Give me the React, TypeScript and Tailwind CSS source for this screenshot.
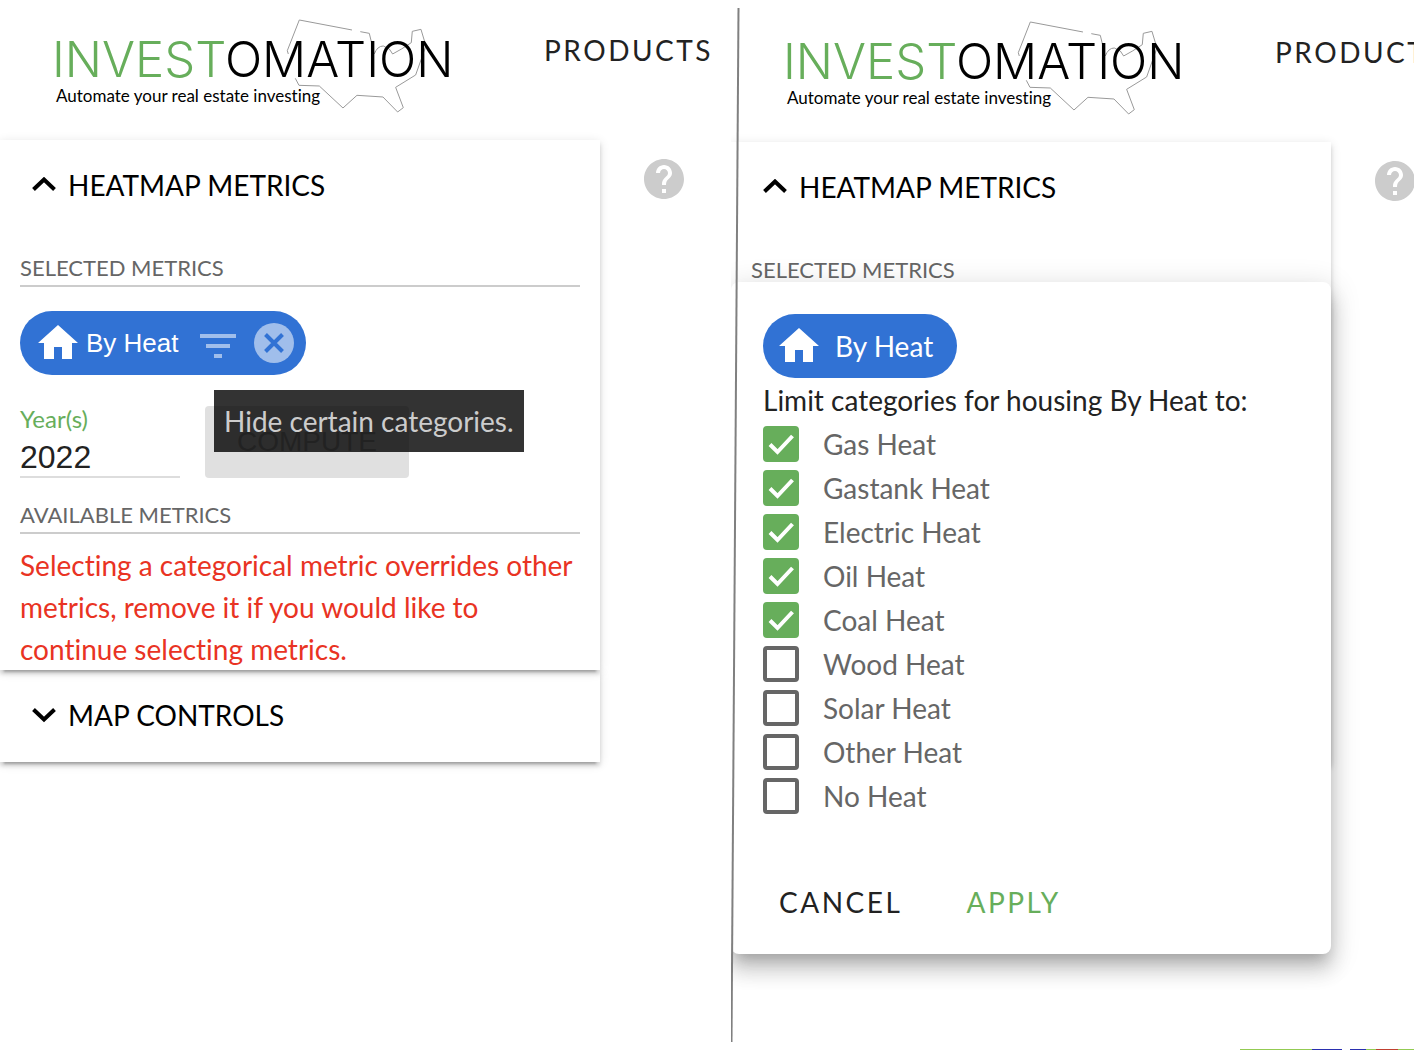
import { useState, type ReactNode } from "react";

function Logo() {
  return (
    <a href="#home" aria-label="Investomation" className="ml-10 mt-2.5 block shrink-0 text-black">
      <svg width="430" height="115" viewBox="0 0 430 115">
        <g transform="scale(0.3333)" fill="none" stroke="#999" strokeWidth="3">
          <path d="M745 132 L742 122 L778 30 L936 60" />
          <path d="M961 65 L988 70 L1003 132 Q1012 108 1030 108 L1048 117 L1058 132 Q1085 118 1114 98 L1117 64 L1143 58 L1158 108 L1127 195 L1067 232 L1090 293 L1073 306 L1029 261 L951 256 L909 294 L838 228 L777 226 L766 205" />
        </g>
        <text x="12" y="67" fontFamily="Inter" fontSize="49" fontWeight="300" fill="#000">
          <tspan fill="#67ae5b">INVEST</tspan>
          <tspan>OMATION</tspan>
        </text>
        <text x="16" y="92" fontFamily="Lato" fontSize="17" fill="#000">Automate your real estate investing</text>
      </svg>
    </a>
  );
}

function Header() {
  return (
    <header className="flex h-[140px] items-start">
      <Logo />
      <a href="#products" className="ml-[74px] mt-[30px] text-[28px] leading-10 tracking-[0.09em] text-[#222]">
        PRODUCTS
      </a>
    </header>
  );
}

function Chevron({ up }: { up?: boolean }) {
  return (
    <svg width="24" height="16" viewBox="0 0 24 16" fill="none" stroke="#000" strokeWidth="4">
      <path d={up ? "M1.5 12.5 L12 2.5 L22.5 12.5" : "M1.5 2.5 L12 12.5 L22.5 2.5"} />
    </svg>
  );
}

function PanelTitle({ open, children }: { open?: boolean; children: string }) {
  return (
    <button type="button" aria-expanded={!!open} className="flex h-[92px] w-full items-center gap-3 px-8 pb-0.5 text-[28px] text-black">
      <Chevron up={open} />
      <span>{children}</span>
    </button>
  );
}

function Subheading({ children }: { children: string }) {
  return (
    <h3 className="border-b-2 border-[#ccc] pb-px text-[22px] leading-8 text-[#666]">{children}</h3>
  );
}

function HelpButton() {
  return (
    <button type="button" aria-label="Help" className="ml-10 mt-[15px] size-12 shrink-0">
      <svg viewBox="0 0 24 24" className="size-12" fill="#ccc">
        <path d="M12 2C6.48 2 2 6.48 2 12s4.48 10 10 10 10-4.48 10-10S17.52 2 12 2zm1 17h-2v-2h2v2zm2.07-7.75l-.9.92C13.45 12.9 13 13.5 13 15h-2v-.5c0-1.1.45-2.1 1.17-2.83l1.24-1.26c.37-.36.59-.86.59-1.41 0-1.1-.9-2-2-2s-2 .9-2 2H8c0-2.21 1.79-4 4-4s4 1.79 4 4c0 .88-.36 1.68-.93 2.25z" />
      </svg>
    </button>
  );
}

function HomeIcon() {
  return (
    <svg viewBox="0 0 24 24" className="size-12 shrink-0" fill="#fff">
      <path d="M10 20v-6h4v6h5v-8h3L12 3 2 12h3v8z" />
    </svg>
  );
}

const PANEL = "bg-white shadow-[0_6px_2px_-4px_rgba(0,0,0,0.2),0_4px_4px_0_rgba(0,0,0,0.14),0_2px_10px_0_rgba(0,0,0,0.12)]";

function Pane({ children, first }: { children: ReactNode; first?: boolean }) {
  return (
    <div className={first ? "" : "pt-0.5"}>
      <Header />
      <div className="flex items-start">
        <div className="w-[600px] shrink-0">{children}</div>
        <HelpButton />
      </div>
    </div>
  );
}

function MetricChip() {
  return (
    <div className="flex h-16 w-fit items-center rounded-full bg-[#3172d4] pl-[14px] pr-3 font-['Liberation_Sans',sans-serif] text-[26px] text-white">
      <HomeIcon />
      <span className="ml-1">By Heat</span>
      <button type="button" aria-label="Hide certain categories" className="ml-5">
        <svg width="39" height="30" viewBox="0 0 39 30" fill="#a0beeb">
          <path d="M1 6h36v4H1zM7 16h24v4H7zM15 26h8v4h-8z" />
        </svg>
      </button>
      <button type="button" aria-label="Remove metric" className="ml-4">
        <svg width="40" height="40" viewBox="0 0 40 40">
          <circle cx="20" cy="20" r="20" fill="#a0beeb" />
          <path d="M11.5 11.5 L28.5 28.5 M28.5 11.5 L11.5 28.5" stroke="#3172d4" strokeWidth="4" />
        </svg>
      </button>
    </div>
  );
}

function LeftPane() {
  const [year, setYear] = useState("2022");
  return (
    <Pane first>
      <section className={`relative z-10 h-[530px] ${PANEL}`}>
        <PanelTitle open>HEATMAP METRICS</PanelTitle>
        <div className="px-5 pt-5">
          <Subheading>SELECTED METRICS</Subheading>
          <div className="relative mt-6 flex items-start">
            <MetricChip />
            <div role="tooltip" className="absolute left-[194px] top-[79px] z-20 bg-black/80 p-2.5 text-[28px] leading-[42px] whitespace-nowrap text-[#ccc]">
              Hide certain categories.
            </div>
          </div>
          <div className="mt-[31px] flex gap-[25px]">
            <div className="flex w-40 flex-col">
              <label htmlFor="years" className="text-2xl leading-[26px] text-[#67ae5b]">Year(s)</label>
              <input
                id="years"
                value={year}
                onChange={(e) => setYear(e.target.value)}
                className="h-[46px] w-full border-b-2 border-[#ddd] pt-1.5 font-['Liberation_Sans',sans-serif] text-[32px] text-[#222] outline-none"
              />
            </div>
            <button type="button" className="h-[72px] w-[204px] rounded bg-[#e0e0e0] font-['Liberation_Sans',sans-serif] text-[28px] text-[#aaa]">
              COMPUTE
            </button>
          </div>
          <div className="mt-[21px]">
            <Subheading>AVAILABLE METRICS</Subheading>
          </div>
          <p className="mt-2.5 text-[28px] leading-[42px] text-[#e93323]">
            Selecting a categorical metric overrides other metrics, remove it if you would like to continue selecting metrics.
          </p>
        </div>
      </section>
      <section className={PANEL}>
        <PanelTitle>MAP CONTROLS</PanelTitle>
      </section>
    </Pane>
  );
}

const CATEGORIES = [
  { name: "Gas Heat", on: true },
  { name: "Gastank Heat", on: true },
  { name: "Electric Heat", on: true },
  { name: "Oil Heat", on: true },
  { name: "Coal Heat", on: true },
  { name: "Wood Heat", on: false },
  { name: "Solar Heat", on: false },
  { name: "Other Heat", on: false },
  { name: "No Heat", on: false },
];

function CategoryRow({ name, on }: { name: string; on: boolean }) {
  return (
    <label className="flex h-11 items-center gap-6 text-[#666]">
      <span className="relative size-9">
        <input
          type="checkbox"
          defaultChecked={on}
          className="peer block size-9 appearance-none rounded border-4 border-[#666] checked:border-[#67ae5b] checked:bg-[#67ae5b]"
        />
        <svg viewBox="0 0 36 36" fill="none" stroke="#fff" strokeWidth="4" className="pointer-events-none absolute inset-0 hidden size-9 peer-checked:block">
          <path d="M7 18.5 L14.5 26 L29.5 10" />
        </svg>
      </span>
      <span>{name}</span>
    </label>
  );
}

function CategoryDialog() {
  return (
    <div
      role="dialog"
      aria-label="Limit categories"
      className="absolute left-0 top-[282px] w-[600px] rounded-lg bg-white px-8 pb-4 pt-8 text-[28px] leading-[44px] shadow-[0_10px_14px_-6px_rgba(0,0,0,0.2),0_16px_20px_2px_rgba(0,0,0,0.14),0_6px_28px_4px_rgba(0,0,0,0.12)]"
    >
      <div className="flex h-16 w-fit items-center gap-3 rounded-full bg-[#3172d4] pl-3 pr-6 text-white">
        <HomeIcon />
        <span>By Heat</span>
      </div>
      <p className="text-[#222]">Limit categories for housing By Heat to:</p>
      {CATEGORIES.map((c) => (
        <CategoryRow key={c.name} name={c.name} on={c.on} />
      ))}
      <div className="mt-12 flex gap-8 tracking-[0.09em]">
        <button type="button" className="h-[72px] px-4 text-[#222]">CANCEL</button>
        <button type="button" className="h-[72px] px-4 text-[#67ae5b]">APPLY</button>
      </div>
    </div>
  );
}

function RightPane() {
  return (
    <div className="relative flex flex-col overflow-hidden">
      <Pane>
        <section className={`min-h-[622px] ${PANEL}`}>
          <PanelTitle open>HEATMAP METRICS</PanelTitle>
          <div className="px-5 pt-5">
            <Subheading>SELECTED METRICS</Subheading>
          </div>
        </section>
      </Pane>
      <CategoryDialog />
      <div className="mt-auto ml-auto flex h-px w-[174px]">
        <span className="w-[72px] bg-[#93cb52]" />
        <span className="w-[30px] bg-[#2a2fb0]" />
        <span className="w-2" />
        <span className="w-4 bg-[#2a2fb0]" />
        <span className="w-2.5 bg-[#93cb52]" />
        <span className="w-[22px] bg-[#c04030]" />
        <span className="flex-1 bg-[#93cb52]" />
      </div>
      <svg width="9" height="1036" viewBox="0 0 9 1036" className="pointer-events-none absolute left-0 top-[7px]">
        <path d="M7.5 1 L0.5 1035" stroke="#808080" strokeWidth="2" />
      </svg>
    </div>
  );
}

export default function App() {
  return (
    <main className="grid min-h-screen grid-cols-[minmax(0,731fr)_minmax(0,683fr)] overflow-hidden bg-white font-['Lato',sans-serif] [font-variant-ligatures:none]">
      <div className="overflow-hidden">
        <LeftPane />
      </div>
      <RightPane />
    </main>
  );
}
